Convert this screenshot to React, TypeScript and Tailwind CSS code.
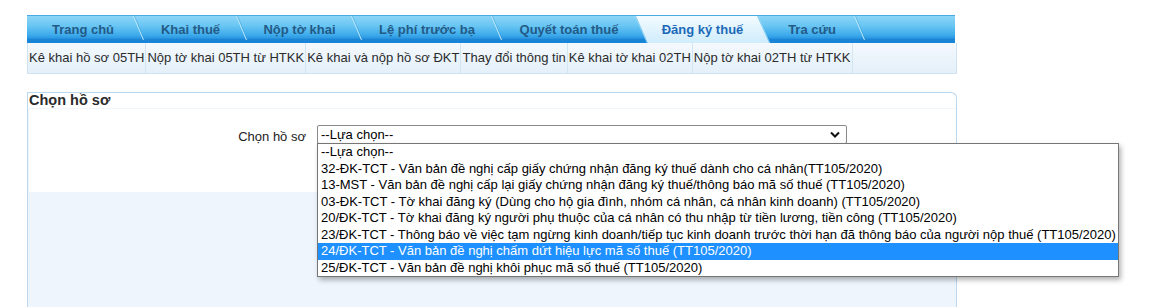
import React from 'react';

const tabs = [
  { label: 'Trang chủ', w: 112 },
  { label: 'Khai thuế', w: 103 },
  { label: 'Nộp tờ khai', w: 115 },
  { label: 'Lệ phí trước bạ', w: 140 },
  { label: 'Quyết toán thuế', w: 144 },
  { label: 'Đăng ký thuế', w: 123, active: true },
  { label: 'Tra cứu', w: 96 },
];

const subLinks = [
  'Kê khai hồ sơ 05TH',
  'Nộp tờ khai 05TH từ HTKK',
  'Kê khai và nộp hồ sơ ĐKT',
  'Thay đổi thông tin',
  'Kê khai tờ khai 02TH',
  'Nộp tờ khai 02TH từ HTKK',
];

const options = [
  '--Lựa chọn--',
  '32-ĐK-TCT - Văn bản đề nghị cấp giấy chứng nhận đăng ký thuế dành cho cá nhân(TT105/2020)',
  '13-MST - Văn bản đề nghị cấp lại giấy chứng nhận đăng ký thuế/thông báo mã số thuế (TT105/2020)',
  '03-ĐK-TCT - Tờ khai đăng ký (Dùng cho hộ gia đình, nhóm cá nhân, cá nhân kinh doanh) (TT105/2020)',
  '20/ĐK-TCT - Tờ khai đăng ký người phụ thuộc của cá nhân có thu nhập từ tiền lương, tiền công (TT105/2020)',
  '23/ĐK-TCT - Thông báo về việc tạm ngừng kinh doanh/tiếp tục kinh doanh trước thời hạn đã thông báo của người nộp thuế (TT105/2020)',
  '24/ĐK-TCT - Văn bản đề nghị chấm dứt hiệu lực mã số thuế (TT105/2020)',
  '25/ĐK-TCT - Văn bản đề nghị khôi phục mã số thuế (TT105/2020)',
];

const Separator = () => (
  <svg className="absolute -right-[6px] top-0 z-10" width="12" height="27" viewBox="0 0 12 27">
    <line x1="0.5" y1="0" x2="10.5" y2="24" stroke="#c4ecfc" strokeWidth="1" />
    <line x1="1.5" y1="0" x2="11.5" y2="24" stroke="#3d9fdc" strokeWidth="0.8" opacity="0.6" />
  </svg>
);

const App: React.FC = () => {
  const selected = 6;
  return (
    <div className="w-[1175px] h-[307px] bg-white overflow-hidden font-['Liberation_Sans',Arial,sans-serif]">
      <div className="pl-[27px] pt-[15px] w-[957px]">
        {/* main tabs */}
        <div className="w-[928px] h-[28px] flex border-t border-[#4aa9e2] bg-[linear-gradient(to_bottom,#8dd5f7_0%,#6ac6f3_35%,#3eabec_70%,#2b98e2_82%,#1a84d6_86%,#1a84d6_100%)]">
          {tabs.map((t, i) => {
            const next = tabs[i + 1];
            const showSep = !t.active && !(next && next.active);
            return (
              <div key={t.label} className="relative h-full flex items-center justify-center shrink-0" style={{ width: t.w }}>
                {t.active && (
                  <svg className="absolute -left-[6px] top-0" width={t.w + 12} height="27" viewBox={`0 0 ${t.w + 12} 27`}>
                    <defs>
                      <linearGradient id="act" x1="0" y1="0" x2="0" y2="1">
                        <stop offset="0" stopColor="#f3fbff" />
                        <stop offset="1" stopColor="#cfecfb" />
                      </linearGradient>
                    </defs>
                    <polygon points={`0,0 ${t.w},0 ${t.w + 12},27 12,27`} fill="url(#act)" />
                    <line x1="0.5" y1="0" x2="12.5" y2="27" stroke="#7fcbf0" strokeWidth="1" />
                    <line x1={t.w - 0.5} y1="0" x2={t.w + 11.5} y2="27" stroke="#7fcbf0" strokeWidth="1" />
                  </svg>
                )}
                <span
                  className={`relative z-20 text-[13px] font-bold pt-[1px] ${t.active ? 'text-[#1b69b8]' : 'text-[#235a86]'}`}
                >
                  {t.label}
                </span>
                {showSep && <Separator />}
              </div>
            );
          })}
          <div className="flex-1" />
        </div>

        {/* sub navigation */}
        <div className="w-[930px] h-[31px] flex items-stretch border border-t-0 border-[#cfe2f1] bg-[linear-gradient(to_bottom,#f4f9fd,#e4f0fa)]">
          {subLinks.map((s) => (
            <div key={s} className="flex items-center px-[1px] border-r border-[#d4e5f2] text-[13px] text-[#2b2b2b] whitespace-nowrap">
              {s}
            </div>
          ))}
        </div>

        {/* panel */}
        <div className="mt-[18px] w-[930px] h-[220px] border border-b-0 border-[#bcd8ee] rounded-tr-[6px] bg-[#eef5fc] flex flex-col">
          <div className="h-[15px] bg-white rounded-tr-[6px] pl-[1px] flex items-center text-[14.5px] font-bold text-[#2a2a2a] leading-none">
            Chọn hồ sơ
          </div>
          <div className="h-[84px] bg-white ml-[1px] border-t border-[#f1f6fa] flex items-start pt-[16px]">
            <div className="w-[277px] text-right text-[13px] text-[#222] pt-[2px]">Chọn hồ sơ</div>
            <div className="relative ml-[11px]">
              <div className="w-[530px] h-[19px] border border-[#8a8a8a] rounded-[2px] bg-white flex items-center justify-between pl-[3px] pr-[6px] text-[13px] text-black">
                <span>--Lựa chọn--</span>
                <svg width="10" height="7" viewBox="0 0 10 7">
                  <polyline points="1,1.5 5,5.5 9,1.5" fill="none" stroke="#111" strokeWidth="2" />
                </svg>
              </div>
              {/* open dropdown list */}
              <div className="absolute left-0 top-[18px] z-30 w-[802px] border border-[#767676] bg-white shadow-[2px_3px_5px_rgba(0,0,0,0.3)]">
                {options.map((o, i) => (
                  <div
                    key={o}
                    className={`h-[16.5px] leading-[16.5px] pl-[3px] text-[13px] whitespace-nowrap ${i === selected ? 'bg-[#1e90ff] text-white' : 'text-black'}`}
                  >
                    {o}
                  </div>
                ))}
              </div>
            </div>
          </div>
          <div className="flex-1" />
        </div>
      </div>
    </div>
  );
};

export default App;
